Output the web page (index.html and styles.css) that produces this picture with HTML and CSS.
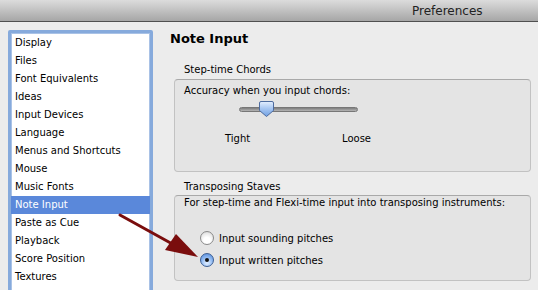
FILE: index.html
```html
<!DOCTYPE html>
<html>
<head>
<meta charset="utf-8">
<link rel="stylesheet" href="styles.css">
</head>
<body>
<div class="window">
  <div class="titlebar"><span class="title">Preferences</span></div>
  <div class="content">
    <div class="listbox">
      <ul class="list">
        <li>Display</li>
        <li>Files</li>
        <li>Font Equivalents</li>
        <li>Ideas</li>
        <li>Input Devices</li>
        <li>Language</li>
        <li>Menus and Shortcuts</li>
        <li>Mouse</li>
        <li>Music Fonts</li>
        <li class="selected">Note Input</li>
        <li>Paste as Cue</li>
        <li>Playback</li>
        <li>Score Position</li>
        <li>Textures</li>
        <li></li>
      </ul>
    </div>
    <div class="panel">
      <h1 class="heading">Note Input</h1>
      <div class="group-label">Step-time Chords</div>
      <div class="group group-chords">
        <div class="text">Accuracy when you input chords:</div>
        <div class="slider">
          <div class="track"></div>
          <svg class="thumb" width="17" height="18" viewBox="0 0 17 18">
            <defs>
              <linearGradient id="tg" x1="0" y1="0" x2="0" y2="1">
                <stop offset="0" stop-color="#e4efff"/>
                <stop offset="0.45" stop-color="#a9c8f2"/>
                <stop offset="1" stop-color="#6f9fe2"/>
              </linearGradient>
            </defs>
            <path d="M3 1.5 H14 Q15.5 1.5 15.5 3 V10.5 L8.5 16.5 L1.5 10.5 V3 Q1.5 1.5 3 1.5 Z" fill="url(#tg)" stroke="#4d6b9e" stroke-width="1"/>
          </svg>
        </div>
        <div class="slider-labels">
          <span class="tight">Tight</span>
          <span class="loose">Loose</span>
        </div>
      </div>
      <div class="group-label label2">Transposing Staves</div>
      <div class="group group-trans">
        <div class="text">For step-time and Flexi-time input into transposing instruments:</div>
        <div class="radios">
          <div class="radio-row"><span class="radio"></span><span>Input sounding pitches</span></div>
          <div class="radio-row"><span class="radio on"><span class="dot"></span></span><span>Input written pitches</span></div>
        </div>
      </div>
    </div>
  </div>
  <svg class="arrow" width="538" height="290" viewBox="0 0 538 290">
    <line x1="120" y1="215" x2="176" y2="246" stroke="#7a0d0d" stroke-width="3" stroke-linecap="round"/>
    <polygon points="198,257 165,250 176,234" fill="#7a0d0d"/>
  </svg>
</div>
</body>
</html>
```
FILE: styles.css
```css
* { box-sizing: border-box; }
html, body { margin: 0; padding: 0; }
body {
  width: 538px;
  height: 290px;
  overflow: hidden;
  background: #ececec;
  font-family: "DejaVu Sans", sans-serif;
  font-size: 10px;
  color: #000;
}
.window { position: relative; width: 538px; height: 290px; }
.titlebar {
  height: 22px;
  background: linear-gradient(#dcdcdc, #a6a6a6);
  border-bottom: 1px solid #505050;
  display: flex;
  align-items: center;
  padding-left: 412px;
}
.title { font-size: 12px; color: #222; }
.content {
  display: flex;
  padding-top: 8px;
}
.listbox {
  margin-left: 8px;
  width: 145px;
  height: 270px;
  border: 3px solid #86aadc;
  border-radius: 2px;
  background: #fff;
  box-shadow: inset 0 0 0 1px #a9c2e6;
}
.list { list-style: none; margin: 0; padding: 1px 0 0; }
.list li {
  height: 18px;
  line-height: 18px;
  padding-left: 4px;
  white-space: nowrap;
}
.list li.selected { background: #5a88da; color: #fff; }
.panel { margin-left: 17px; width: 357px; }
.heading {
  margin: 0;
  font-size: 13px;
  font-weight: bold;
  line-height: 18px;
  height: 18px;
}
.group-label { margin: 15px 0 0 14px; line-height: 14px; height: 14px; }
.label2 { margin-top: 8px; }
.group {
  margin-left: 4px;
  width: 357px;
  background: #e4e4e4;
  border: 1px solid #c2c2c2;
  border-top-color: #a9a9a9;
  border-radius: 4px;
}
.group .text { padding-left: 9px; line-height: 14px; }
.group-chords { margin-top: 2px; height: 93px; padding-top: 4px; }
.slider { position: relative; height: 20px; margin-left: 64px; margin-top: 5px; width: 120px; }
.track {
  position: absolute;
  left: 0; top: 4px;
  width: 119px; height: 5px;
  border-radius: 3px;
  background: linear-gradient(#7d7d7d, #b5b5b5);
  border: 1px solid #777;
}
.thumb { position: absolute; left: 19px; top: -3px; }
.slider-labels { position: relative; height: 14px; margin-top: 9px; }
.slider-labels span { position: absolute; top: 0; line-height: 14px; }
.tight { left: 50px; }
.loose { left: 167px; }
.group-trans { margin-top: 1px; height: 86px; padding-top: 0; }
.radios { margin-top: 17px; padding-left: 25px; }
.radio-row { display: flex; align-items: center; height: 22px; gap: 5px; }
.radio {
  width: 14px; height: 14px;
  border-radius: 50%;
  border: 1px solid #8a8a8a;
  background: radial-gradient(circle at 50% 70%, #ffffff 30%, #e6e6e6 70%, #c8c8c8 100%);
  display: flex; align-items: center; justify-content: center;
}
.radio.on {
  border-color: #3c5e93;
  background: radial-gradient(circle at 50% 75%, #d6e8ff 10%, #89b4ef 55%, #4f86d6 100%);
}
.dot { width: 4px; height: 4px; border-radius: 50%; background: #111; }
.arrow { position: absolute; left: 0; top: 0; pointer-events: none; }
```
